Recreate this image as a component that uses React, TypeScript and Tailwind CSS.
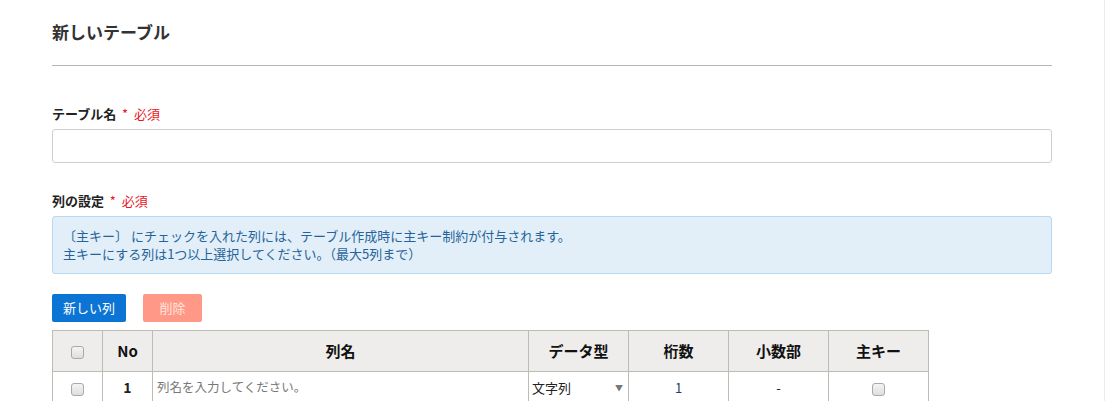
import React from "react";

const font = { fontFamily: '"Noto Sans CJK JP", "Noto Sans", sans-serif' };

function Check() {
  return (
    <span className="inline-block w-[13px] h-[13px] rounded-[3px] border border-[#a9a9a9] bg-gradient-to-b from-[#f4f4f4] to-[#dedede] align-middle" />
  );
}

export default function App() {
  return (
    <div className="w-[1105px] h-[401px] bg-white overflow-hidden text-[#222] border-r border-[#ececec]" style={font}>
      <div className="ml-[52px] w-[1000px]">
        <h1 className="pt-[20px] text-[17px] leading-[24px] font-bold text-[#333]">新しいテーブル</h1>
        <div className="mt-[21px] h-px bg-[#b5b5b5]" />
        <div className="mt-[39px] text-[13px] leading-[18px] font-bold">
          テーブル名 <span className="text-[#e8161f] font-normal">&nbsp;*&nbsp; 必須</span>
        </div>
        <div className="mt-[6px] h-[34px] rounded-[3px] border border-[#cfcfcb] bg-white" />
        <div className="mt-[29px] text-[13px] leading-[18px] font-bold">
          列の設定 <span className="text-[#e8161f] font-normal">&nbsp;*&nbsp; 必須</span>
        </div>
        <div className="mt-[6px] h-[58px] rounded-[3px] border border-[#b7daf0] bg-[#e2eff8] px-[10px] pt-[10px] text-[13px] leading-[18px] text-[#25639a]">
          <div>〔主キー〕 にチェックを入れた列には、テーブル作成時に主キー制約が付与されます。</div>
          <div>主キーにする列は1つ以上選択してください。（最大5列まで）</div>
        </div>
        <div className="mt-[20px] flex gap-[17px]">
          <button className="h-[28px] w-[74px] rounded-[2px] bg-[#0b74d5] text-white text-[13px]">新しい列</button>
          <button className="h-[28px] w-[59px] rounded-[2px] bg-[#ff9886] text-[#ffe4dc] text-[13px]">削除</button>
        </div>
        <table className="mt-[8px] border-collapse text-[13px]">
          <thead>
            <tr className="h-[41px] bg-[#eeedeb] text-[15px] font-bold text-[#111]">
              <th className="w-[50px] border border-[#bdbbb6]"><Check /></th>
              <th className="w-[50px] border border-[#bdbbb6]">No</th>
              <th className="w-[376px] border border-[#bdbbb6]">列名</th>
              <th className="w-[100px] border border-[#bdbbb6]">データ型</th>
              <th className="w-[100px] border border-[#bdbbb6]">桁数</th>
              <th className="w-[100px] border border-[#bdbbb6]">小数部</th>
              <th className="w-[100px] border border-[#bdbbb6]">主キー</th>
            </tr>
          </thead>
          <tbody>
            <tr className="h-[32px]">
              <td className="border border-[#bdbbb6] text-center"><Check /></td>
              <td className="border border-[#bdbbb6] text-center font-bold text-[14px]">1</td>
              <td className="border border-[#bdbbb6] px-[4px] text-[#777] text-[12.5px]">列名を入力してください。</td>
              <td className="border border-[#bdbbb6] pl-[3px] pr-[5px]">
                <div className="flex items-center justify-between">
                  <span className="text-[#222]">文字列</span>
                  <span className="text-[#777] text-[8px]">▼</span>
                </div>
              </td>
              <td className="border border-[#bdbbb6] text-center text-[#1d3b6e]">1</td>
              <td className="border border-[#bdbbb6] text-center">-</td>
              <td className="border border-[#bdbbb6] text-center"><Check /></td>
            </tr>
          </tbody>
        </table>
      </div>
    </div>
  );
}
